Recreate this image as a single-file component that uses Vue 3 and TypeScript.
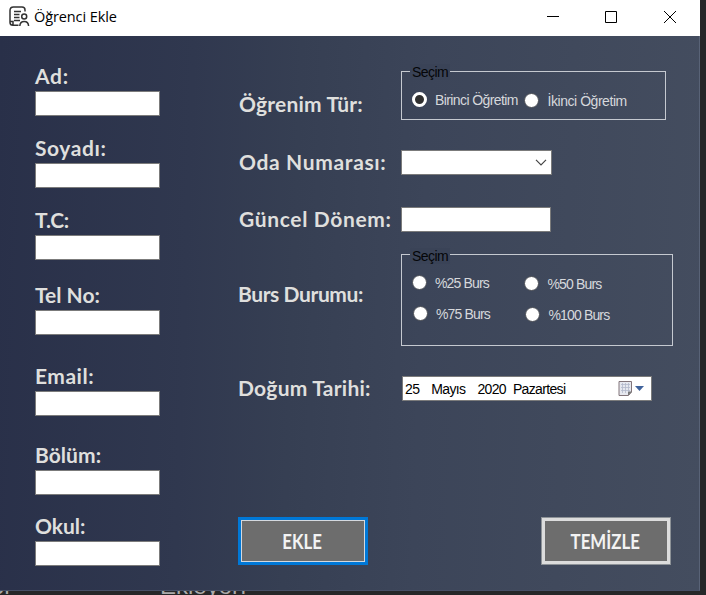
<script setup lang="ts">
import { ref } from 'vue'

interface Field { label: string; gap: number; spacing: number; key: string }

const fields: Field[] = [
  { key: 'ad', label: 'Ad:', gap: 28, spacing: 0.7 },
  { key: 'soyad', label: 'Soyadı:', gap: 20, spacing: 0.6 },
  { key: 'tc', label: 'T.C:', gap: 20, spacing: -0.3 },
  { key: 'tel', label: 'Tel No:', gap: 23, spacing: 0 },
  { key: 'email', label: 'Email:', gap: 29, spacing: 0.5 },
  { key: 'bolum', label: 'Bölüm:', gap: 27, spacing: 0.05 },
  { key: 'okul', label: 'Okul:', gap: 19, spacing: 0 },
]
const form = ref<Record<string, string>>({})
const term = ref('')
const education = ref('Birinci Öğretim')
const grant = ref('')

function clearForm(): void {
  form.value = {}
  term.value = ''
  grant.value = ''
}
</script>

<template>
  <div class="desktop">
    <div class="window">
      <header class="titlebar">
        <svg class="app-icon" width="21" height="22" viewBox="0 0 21 22" fill="none" stroke="#333" stroke-width="1.5">
          <path d="M9.5 19.3H4Q1 19.3 1 16.5V4.5Q1 1 4.5 1H13Q16 1 16 4V5.5M1 15.5H4V18.5" />
          <path d="M5 5.5H12M5 8.5H10.5M5 11.5H10.5M5 14.5H11" />
          <circle cx="15.2" cy="10.5" r="2.5" /><path d="M10.8 20Q11 15.4 15.2 15.4T19.6 20" />
        </svg>
        <h1>Öğrenci Ekle</h1>
        <div class="controls">
          <svg width="12" height="12" stroke="#000" fill="none"><path d="M0 5.5H12" /></svg>
          <svg width="12" height="12" stroke="#000" fill="none"><path d="M.5.5H11.5V11.5H.5Z" /></svg>
          <svg class="close" width="12" height="12" stroke="#000" fill="none"><path d="M0 0L12 12M12 0L0 12" /></svg>
        </div>
      </header>
      <main class="body">
        <section class="left">
          <div v-for="f in fields" :key="f.key" class="field" :style="{ paddingTop: f.gap + 'px' }">
            <label class="caption" :for="f.key"><span :style="{ letterSpacing: f.spacing + 'px' }">{{ f.label }}</span></label>
            <input :id="f.key" v-model="form[f.key]" class="box" />
          </div>
        </section>
        <section class="right">
          <div class="row r1">
            <span class="caption">Öğrenim Tür:</span>
            <div class="group g1">
              <span class="legend">Seçim</span>
              <label class="radio"><input v-model="education" type="radio" name="e" value="Birinci Öğretim" /><span>Birinci Öğretim</span></label>
              <label class="radio second"><input v-model="education" type="radio" name="e" value="İkinci Öğretim" /><span>İkinci Öğretim</span></label>
            </div>
          </div>
          <div class="row r2">
            <span class="caption">Oda Numarası:</span>
            <div class="box combo"><svg width="12" height="7" fill="none" stroke="#444" stroke-width="1.2"><path d="M1 .8L6 5.8L11 .8" /></svg></div>
          </div>
          <div class="row r3">
            <span class="caption">Güncel Dönem:</span>
            <input v-model="term" class="box term" />
          </div>
          <div class="row r4">
            <span class="caption">Burs Durumu:</span>
            <div class="group g2">
              <span class="legend">Seçim</span>
              <label class="radio"><input v-model="grant" type="radio" name="b" value="25" /><span>%25 Burs</span></label>
              <label class="radio second"><input v-model="grant" type="radio" name="b" value="50" /><span>%50 Burs</span></label>
              <label class="radio low"><input v-model="grant" type="radio" name="b" value="75" /><span>%75 Burs</span></label>
              <label class="radio second low"><input v-model="grant" type="radio" name="b" value="100" /><span>%100 Burs</span></label>
            </div>
          </div>
          <div class="row r5">
            <span class="caption">Doğum Tarihi:</span>
            <div class="box date">
              <span class="day">25</span><span class="month">Mayıs</span><span class="year">2020</span><span class="weekday">Pazartesi</span>
              <svg width="26" height="17" viewBox="0 0 26 17">
                <path d="M1 1.5H13.5V12L10.5 15.5H1Z" fill="#e6e8ef" stroke="#82757a" />
                <path d="M3 4.5H12M3 7.5H12M3 10.5H12M4.5 3V13M7.5 3V13M10.5 3V12" stroke="#b3b9cb" stroke-width=".8" />
                <path d="M10.5 15V12H13.5" fill="#777" stroke="#777" />
                <path d="M17 6H26L21.5 11Z" fill="#40639c" />
              </svg>
            </div>
          </div>
          <div class="actions">
            <button class="primary"><span>EKLE</span></button>
            <button class="secondary" @click="clearForm"><span>TEMİZLE</span></button>
          </div>
        </section>
      </main>
    </div>
    <div class="behind"><span class="edge">or</span><span class="status">Ekleyorı</span></div>
  </div>
</template>

<style>
body { margin: 0; overflow: hidden; }
</style>
<style scoped>
* { box-sizing: border-box; }
.desktop { width: 706px; height: 595px; overflow: hidden; background: #262829; font-family: "Liberation Sans", sans-serif; }
.window { width: 700px; height: 591px; }
.titlebar { height: 36px; display: flex; background: #fff; padding-left: 9px; }
.app-icon { margin-top: 6px; }
h1 { margin: 6px 0 0 4px; font: 400 14.5px/22px "Open Sans", sans-serif; letter-spacing: -.1px; color: #000; white-space: nowrap; }
.controls { margin-left: auto; padding: 11px 24px 0 0; display: flex; gap: 46px; }
.close { margin-left: 1px; }
.body { height: 555px; display: flex; background: linear-gradient(92deg, #293049 0%, #30384f 27%, #363f53 42%, #3c4559 60%, #444d5f 100%); border-right: 1px solid #596377; border-bottom: 1px solid #465066; }
.left { width: 238px; padding-left: 35px; }
.caption { display: block; height: 25px; font: 700 21px/23px Lato, sans-serif; color: #dfdfdd; white-space: nowrap; }
.field .caption { height: 27px; }
.box { display: block; width: 125px; height: 25px; border: 1px solid #7b7b7b; background: #fff; outline: 0; padding: 0 3px; border-radius: 0; }
.right { width: 440px; }
.row { display: flex; height: 50px; }
.row > .caption { width: 163px; flex: none; }
.r1 { margin-top: 35px; }
.r1 .caption { padding: 21px 0 0 1px; letter-spacing: .2px; }
.r2 { margin-top: 29px; }
.r2 .caption { padding-left: 1px; letter-spacing: .65px; }
.r3 { margin-top: 7px; }
.r3 .caption { padding-left: 1px; letter-spacing: .65px; }
.r4 { height: 92px; margin-top: -3px; }
.r4 .caption { padding-top: 28px; letter-spacing: -.4px; }
.r5 { margin-top: 30px; }
.r5 .caption { letter-spacing: .25px; }
.group { position: relative; border: 1px solid #c5c9d0; display: grid; grid-template-columns: 112px 1fr; padding-left: 10px; align-content: start; }
.g1 { width: 265px; height: 49px; padding-top: 20px; }
.g2 { width: 272px; height: 92px; padding-top: 20px; row-gap: 14px; letter-spacing: -.85px; }
.legend { position: absolute; left: 8px; top: -8px; height: 16px; padding: 0 2px; font-size: 14px; line-height: 17px; letter-spacing: -.55px; color: #050608; background: #3a4357; }
.g2 .legend { top: -7px; }
.radio { display: flex; align-items: center; height: 16px; font-size: 14px; color: #d6d8dc; white-space: nowrap; }
.g1 .radio { letter-spacing: -.6px; }
.g1 .radio.second { letter-spacing: -.45px; }
.radio.second { margin-top: 1px; }
.radio.second span { margin-left: .5px; }
.radio.low { padding-left: 1px; }
.radio input { appearance: none; width: 15px; height: 15px; flex: none; margin: -1px 8px 0 0; border-radius: 50%; background: #fff; border: .5px solid #4b4e55; }
.radio input:checked { background: #303030; border: 3px solid #fff; }
.combo { width: 151px; display: flex; justify-content: flex-end; align-items: center; padding-right: 4px; }
.term { width: 150px; }
.date { width: 250px; display: flex; align-items: center; font-size: 14px; letter-spacing: -.65px; margin-left: 1px; padding-left: 2px; }
.month { margin-left: 12px; }
.year { margin-left: 12px; }
.weekday { margin-left: 7px; }
.date svg { margin-left: auto; margin-right: 4px; }
.actions { display: flex; justify-content: space-between; margin-top: 91px; width: 433px; }
button { width: 130px; height: 48px; background: #6d6d6d; color: #f3f3f3; font: 700 20.5px Lato, sans-serif; padding: 0; border: 4px solid #dcdcdc; outline: 1px solid #8d9297; outline-offset: -1px; }
button span { display: inline-block; transform: translateX(-1px) scaleX(.82); }
.primary { border: 3px solid #0078d7; outline: 0; box-shadow: inset 0 0 0 1px #d4d9df; }
.behind { display: flex; height: 4px; color: #aaa; font-size: 24px; line-height: 24px; overflow: hidden; }
.behind span { margin-top: -17px; }
.edge { width: 160px; text-indent: -9px; }
</style>
